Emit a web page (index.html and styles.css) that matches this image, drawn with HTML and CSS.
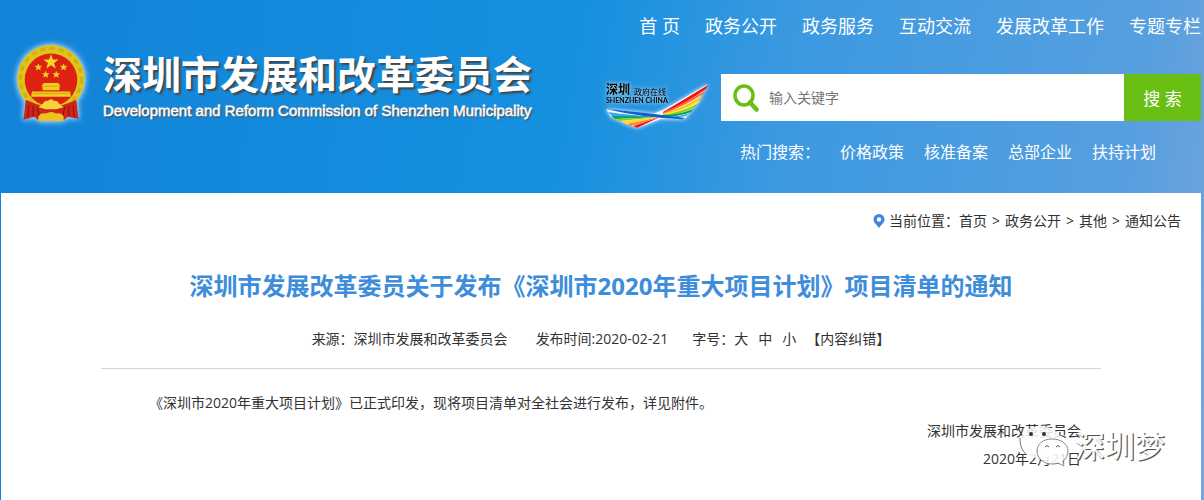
FILE: index.html
```html
<!DOCTYPE html>
<html lang="zh-CN">
<head>
    <meta charset="UTF-8">
    <meta name="viewport" content="width=device-width, initial-scale=1.0">
    <title>深圳市发展和改革委员会</title>
    <link rel="stylesheet" href="styles.css">
</head>
<body>
    <header class="header">
        <div class="brand">
            <svg class="emblem" viewBox="2 2 68 76" width="72" height="80" aria-hidden="true">
                <circle cx="36" cy="36" r="32" fill="#e0c41a"/>
                <circle cx="36" cy="36" r="29" fill="none" stroke="#cdb01a" stroke-width="3" stroke-dasharray="5 4"/>
                <circle cx="36" cy="37" r="25" fill="#dd2214"/>
                <path d="M36 14l1.400 4.100h4.400l-3.500 2.700 1.300 4.200-3.600-2.500-3.600 2.500 1.300-4.200-3.500-2.700h4.400z" fill="#f6d925" stroke="#f6d925"/>
                <g fill="#f6d925" stroke="#f6d925" stroke-width=".5">
                    <path d="M24 22l.8 2h2.200l-1.700 1.400.6 2.200-1.900-1.300-1.900 1.300.6-2.200L21 24h2.200z"/>
                    <path d="M48 22l.8 2h2.200l-1.700 1.400.6 2.200-1.900-1.300-1.900 1.300.6-2.200L45 24h2.200z"/>
                    <path d="M31 29l.8 2h2.200l-1.700 1.400.6 2.200-1.900-1.300-1.900 1.300.6-2.200L28 31h2.200z"/>
                    <path d="M41 29l.8 2h2.200l-1.700 1.400.6 2.200-1.900-1.300-1.900 1.300.6-2.200L38 31h2.200z"/>
                </g>
                <path d="M29 40h14l2 3H27zM28 43h16v4H28zM18 48h36l1 5H17z" fill="#f0cd1c"/>
                <path d="M27 43h18M19 50h34" stroke="#d9a514" fill="none"/>
                <path d="M12 56l5 2q19 9 38 0l5-2 2 18-10-2-5 4H25l-5-4-10 3z" fill="#cf2418"/>
                <path d="M15 61l-1 12M19 62v10M23 63l2 9M57 61l1 12M53 62v10M49 63l-2 9" stroke="#8c150e" fill="none"/>
                <path d="M28 60q2-4 5-3 3-3 6 0 3-1 5 3l4 3-7 2H31l-7-2z" fill="#f3d53a"/>
                <path d="M24 72q2-4 7-3 5-3 10 0 5-1 7 3v4H24z" fill="#e8c322"/>
            </svg>
            <div class="brand-text">
                <div class="brand-name">深圳市发展和改革委员会</div>
                <div class="brand-en">Development and Reform Commission of Shenzhen Municipality</div>
            </div>
        </div>
        <div class="header-right">
            <nav class="nav">
                <a href="#">首 页</a>
                <a href="#">政务公开</a>
                <a href="#">政务服务</a>
                <a href="#">互动交流</a>
                <a href="#">发展改革工作</a>
                <a href="#">专题专栏</a>
            </nav>
            <div class="search-row">
                <svg class="sz-logo" viewBox="0 0 108 48" width="108" height="48" role="img" aria-label="深圳政府在线">
                    <path d="M105 2L62 27 50 32 3 27 8 35 34 46 58 37H82z" fill="#fff" fill-opacity=".8"/>
                    <path d="M60 30Q82 17 105 3L103 7Q84 21 60 31z" fill="#f0161b"/>
                    <path d="M60 31Q82 21 102 9L100 12Q82 24 60 32z" fill="#ff6d1a"/>
                    <path d="M60 32Q82 25 99 14L98 17Q82 28 60 33z" fill="#ffb91a"/>
                    <path d="M60 32Q80 28 97 18L95 21Q80 31 60 33z" fill="#ffe63c"/>
                    <path d="M58 33Q78 31 94 22L92 25Q78 33 58 34z" fill="#7bcf28"/>
                    <path d="M58 33Q76 33 90 27L88 30Q76 35 58 35z" fill="#12a04c"/>
                    <path d="M58 34Q74 36 86 31L83 34Q72 37 58 36z" fill="#2aaef0"/>
                    <path d="M5 30q20 3 52 5H10z" fill="#35a9ea"/>
                    <path d="M8 34l49 1-45 2z" fill="#12a04c"/>
                    <path d="M13 37l44-2-40 4z" fill="#7bcf28"/>
                    <path d="M18 39l39-4-34 7z" fill="#ffd92c"/>
                    <path d="M24 42l33-7-29 9z" fill="#ff8420"/>
                    <path d="M30 44l27-9-23 11z" fill="#f0161b"/>
                    <path d="M3 27q35 3 79 9-2 2-6 1-40-2-73-10z" fill="#0f5fcd"/>
                    <text x="3" y="12" class="sz-big">深圳</text>
                    <text x="31" y="13" class="sz-small">政府在线</text>
                    <text x="3" y="21" class="sz-en">SHENZHEN CHINA</text>
                </svg>
                <form class="search">
                    <label for="keyword" aria-label="搜索关键字">
                        <svg viewBox="0 0 26 28" width="26" height="28" fill="none" stroke="#69bf14">
                            <ellipse cx="11" cy="11.500" rx="9" ry="9.500" stroke-width="3.500"/>
                            <path d="M17 18.500l6.500 7" stroke-width="4.500" stroke-linecap="round"/>
                        </svg>
                    </label>
                    <input type="text" id="keyword" placeholder="输入关键字">
                    <button type="button">搜 索</button>
                </form>
            </div>
            <div class="hot">
                <span>热门搜索：</span>
                <a href="#">价格政策</a>
                <a href="#">核准备案</a>
                <a href="#">总部企业</a>
                <a href="#">扶持计划</a>
            </div>
        </div>
    </header>

    <main class="main">
        <div class="crumbs">
            <svg viewBox="0 0 12 14" width="12" height="14" aria-hidden="true">
                <path fill="#3e86df" fill-rule="evenodd" d="M6 0a5.500 5.500 0 0 1 5.500 5.500C11.500 8.500 8 11 6 14 4 11 .5 8.500.5 5.500A5.500 5.500 0 0 1 6 0zm0 3.300a2.200 2.200 0 1 0 0 4.400 2.200 2.200 0 0 0 0-4.400z"/>
            </svg>
            <span>当前位置：<a href="#">首页</a><i>&gt;</i><a href="#">政务公开</a><i>&gt;</i><a href="#">其他</a><i>&gt;</i><a href="#">通知公告</a></span>
        </div>
        <article class="article">
            <h1>深圳市发展改革委员关于发布《深圳市2020年重大项目计划》项目清单的通知</h1>
            <div class="meta">
                <span class="source">来源：深圳市发展和改革委员会</span>
                <span class="date">发布时间:2020-02-21</span>
                <span class="size">字号：<a href="#">大</a><a href="#">中</a><a href="#">小</a></span>
                <a href="#">【内容纠错】</a>
            </div>
            <div class="content">
                <p class="text">《深圳市2020年重大项目计划》已正式印发，现将项目清单对全社会进行发布，详见附件。</p>
                <div class="sign">
                    <p>深圳市发展和改革委员会</p>
                    <p>2020年2月21日</p>
                    <div class="watermark">
                        <svg viewBox="0 0 52 42" width="52" height="42" aria-hidden="true">
                            <path d="M22 1C10 1 1 9 1 18c0 5 3 9 7 12l-2 6 7-4c3 1 6 1 9 1 12 0 21-7 21-15S34 1 22 1z" fill="#fff" fill-opacity=".85"/>
                            <path d="M1 13c0 8 2 13 7 17" fill="none" stroke="#777"/>
                            <path d="M33 14c-9 0-15 5-15 12s6 13 15 13c2 0 4 0 6-1l6 3-1-5c3-2 5-6 5-10 0-7-7-12-16-12z" fill="#fff" fill-opacity=".85" stroke="#888"/>
                            <circle cx="12" cy="9" r="2" fill="#333"/>
                            <circle cx="25" cy="9" r="2" fill="#333"/>
                            <path d="M26 22q2-3 4 0M37 22q2-3 4 0" fill="none" stroke="#555"/>
                        </svg>
                        <span>深圳梦</span>
                    </div>
                </div>
            </div>
        </article>
    </main>
</body>
</html>
```
FILE: styles.css
```css
* {
    box-sizing: border-box;
}
body {
    margin: 0;
    min-height: 100vh;
    display: flex;
    flex-direction: column;
    font-family: "Open Sans", "Noto Sans CJK SC", sans-serif;
    font-size: 14px;
    line-height: 28px;
    color: #333;
    background: linear-gradient(100deg, #1383d8 0%, #1590df 45%, #3b99e1 62%, #579fdf 90%, #78a6dc 100%);
}
a {
    color: inherit;
    text-decoration: none;
}
a:hover {
    text-decoration: underline;
}
p {
    margin: 0;
}
.header {
    display: flex;
    justify-content: space-between;
    padding: 0 3px 0 15px;
    color: #fff;
}
.brand {
    display: flex;
    gap: 16px;
    padding-top: 43px;
}
.emblem {
    filter: drop-shadow(0 0 3px #fff);
}
.brand-text {
    white-space: nowrap;
}
.brand-name {
    font-family: "Noto Sans CJK SC", sans-serif;
    font-size: 39px;
    font-weight: bold;
    line-height: 58px;
    text-shadow: 2px 2px 2px #444;
}
.brand-en {
    font-family: "Liberation Sans", Arial, sans-serif;
    font-size: 15px;
    line-height: 20px;
    -webkit-text-stroke: 1px #fff;
    paint-order: stroke;
    text-shadow: 1px 1px 2px #333;
}
.header-right {
    display: flex;
    flex-direction: column;
    align-items: flex-end;
    white-space: nowrap;
}
.nav {
    display: flex;
    gap: 25px;
    padding-top: 12px;
    font-size: 18px;
}
.search-row {
    display: flex;
    gap: 10px;
    margin-top: 34px;
}
.sz-logo {
    margin-top: 8px;
    filter: drop-shadow(0 0 2px #fff);
}
.sz-big {
    font-size: 12px;
    font-weight: bold;
}
.sz-small {
    font-size: 8px;
}
.sz-en {
    font-family: "Lato", sans-serif;
    font-size: 7px;
    font-weight: bold;
}
.search {
    display: flex;
    width: 480px;
    height: 47px;
    background: #fff;
}
.search label {
    display: flex;
    align-items: center;
    padding: 0 10px 0 12px;
}
.search input {
    flex: 1;
    min-width: 0;
    padding: 0;
    border: none;
    outline: none;
    font-family: inherit;
    font-size: 14px;
    color: #333;
}
.search input::placeholder {
    color: #757575;
}
.search button {
    width: 77px;
    border: none;
    background: #69bf14;
    color: #fff;
    font-family: inherit;
    font-size: 17px;
    cursor: pointer;
}
.hot {
    display: flex;
    gap: 20px;
    padding: 8px 45px 27px 0;
    font-size: 16px;
}
.main {
    flex: 1;
    margin: 0 3px 0 1px;
    background: #fff;
}
.crumbs {
    display: flex;
    justify-content: flex-end;
    align-items: center;
    gap: 4px;
    padding: 14px 20px 0 0;
}
.crumbs i {
    margin: 0 5px;
    font-style: normal;
}
.article {
    margin: 0 100px;
}
.article h1 {
    margin: 33px 0 0;
    font-size: 24px;
    line-height: 36px;
    text-align: center;
    color: #3e8ddb;
    white-space: nowrap;
}
.meta {
    display: flex;
    justify-content: center;
    padding: 21px 0 15px;
    border-bottom: 1px solid #d5d5d5;
}
.date {
    margin: 0 24px 0 28px;
}
.size a {
    margin-right: 10px;
}
.content {
    padding: 20px;
}
.text {
    text-indent: 2em;
}
.sign {
    position: relative;
    text-align: right;
}
/* account mark laid over the signature */
.watermark {
    position: absolute;
    top: 8px;
    right: -84px;
    display: flex;
    align-items: center;
    gap: 4px;
}
.watermark span {
    font-size: 30px;
    line-height: 42px;
    color: #fff;
    text-shadow: 1px 1px 0 #555, 1px 1px 1px #777;
}
```
